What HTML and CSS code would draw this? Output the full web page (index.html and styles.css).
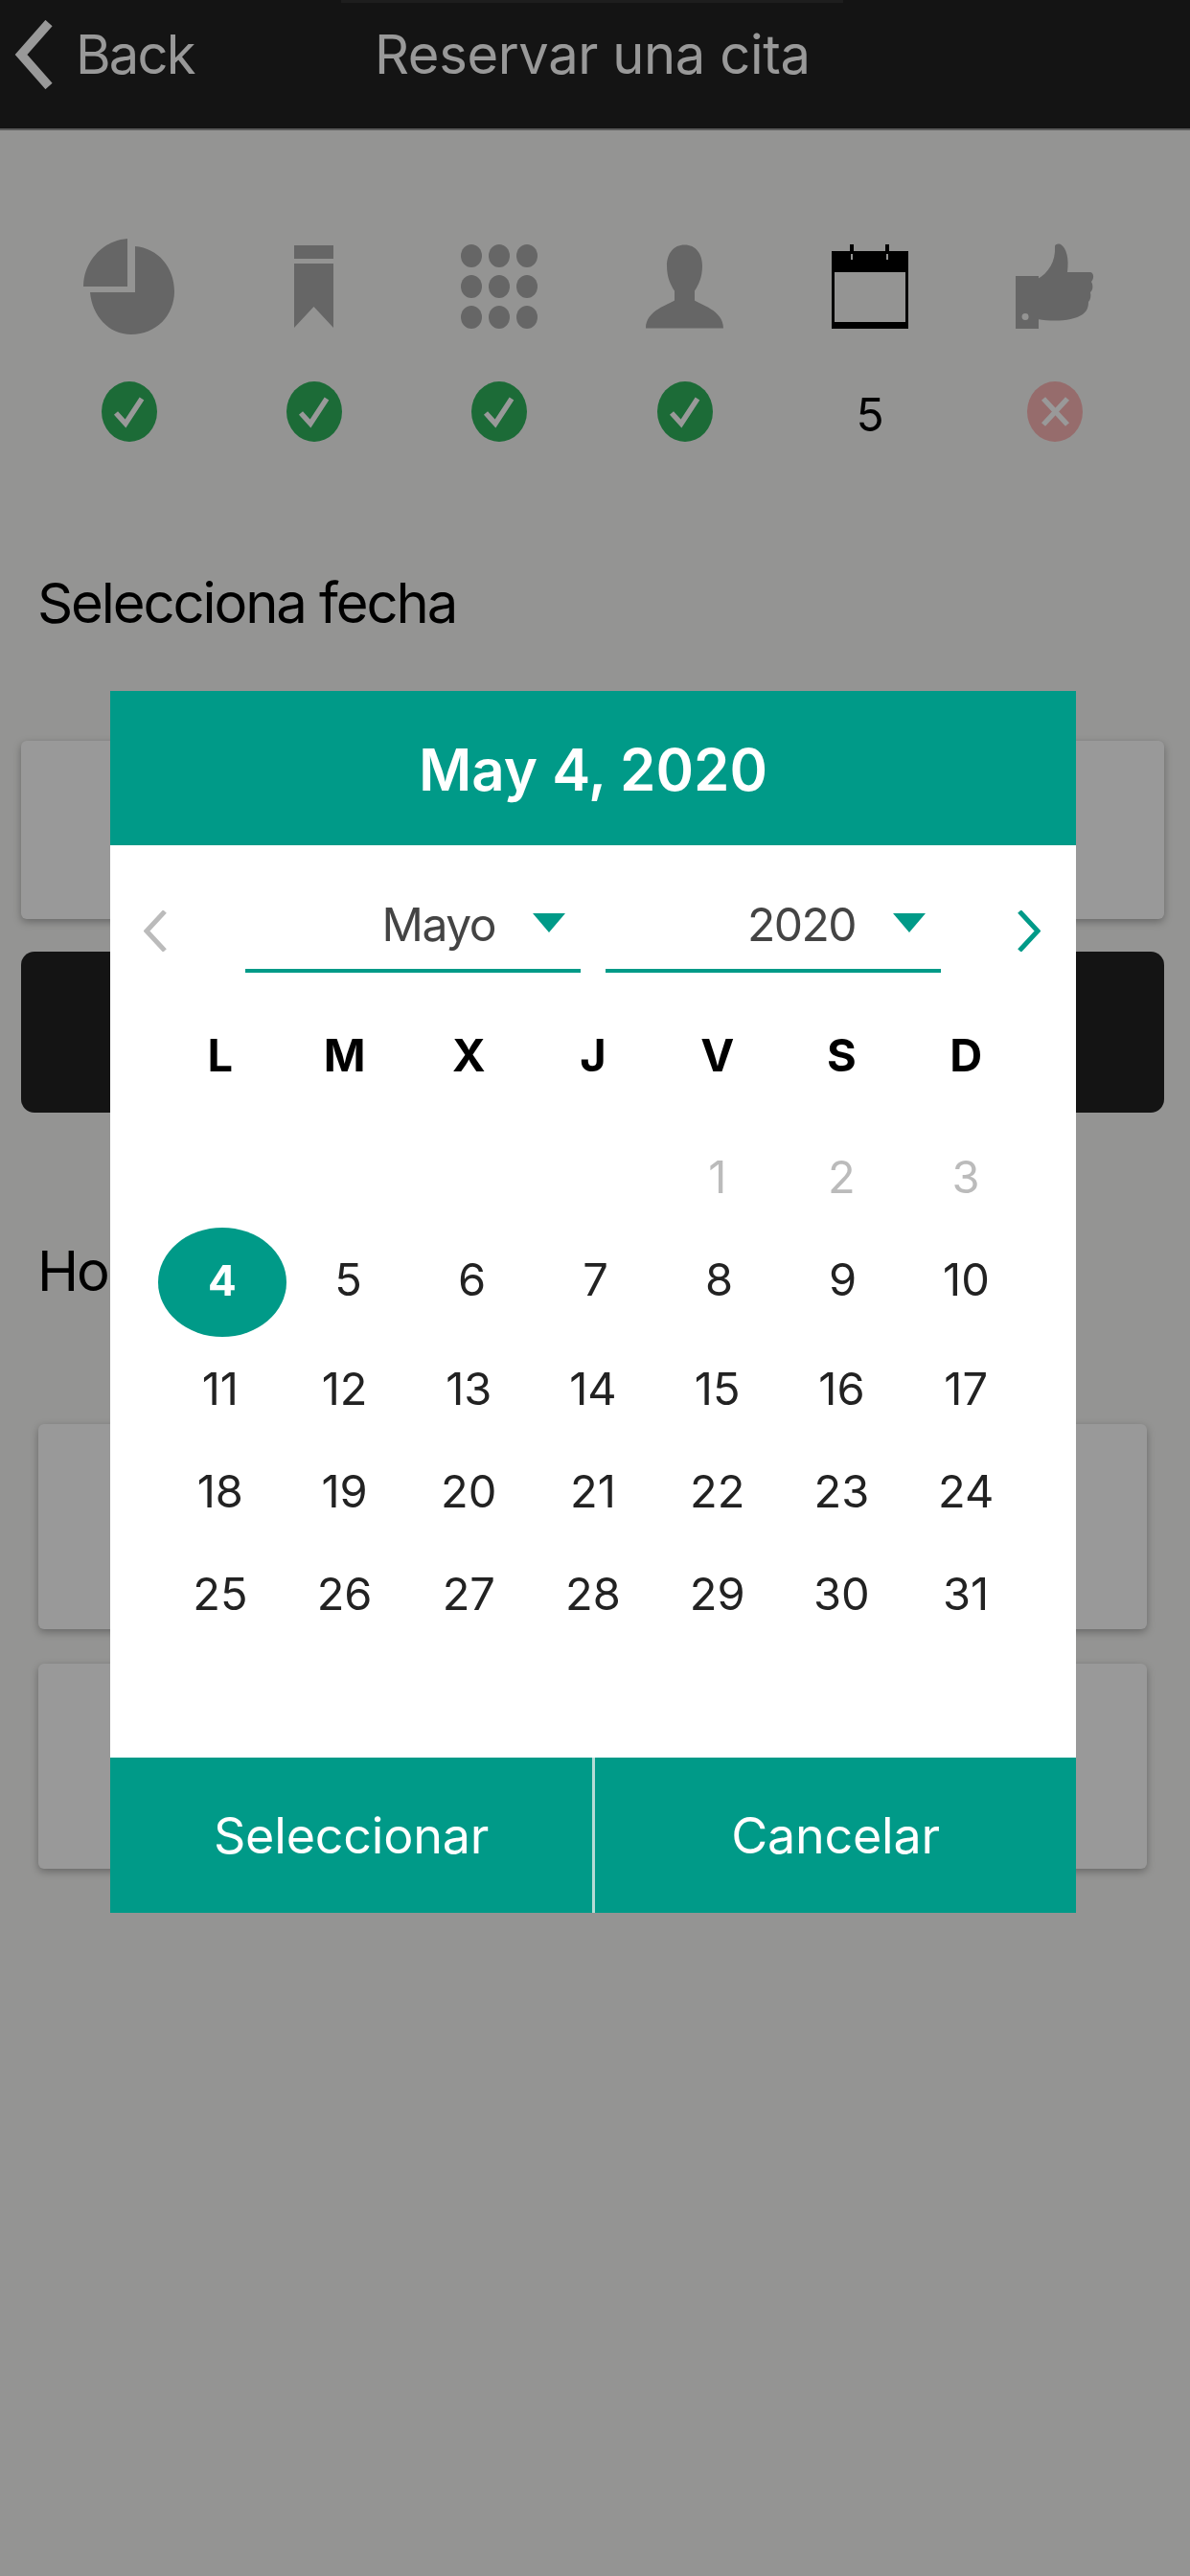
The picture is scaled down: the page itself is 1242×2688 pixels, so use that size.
FILE: index.html
```html
<!DOCTYPE html>
<html lang="es">
<head>
<meta charset="utf-8">
<title>Reservar una cita</title>
<link rel="stylesheet" href="styles.css">
</head>
<body>

<svg class="defs" width="0" height="0">
    <symbol id="done" viewBox="0 0 58 63">
        <ellipse cx="29" cy="31.5" rx="29" ry="31.5" fill="#2fb25d"/>
        <path d="M15 33 L25 44 L42 18" fill="none" stroke="#fff" stroke-width="5.5"/>
    </symbol>
    <symbol id="pending" viewBox="0 0 58 63">
        <ellipse cx="29" cy="31.5" rx="29" ry="31.5" fill="#fbb4b4"/>
        <path d="M17 18 L42 45 M42 18 L17 45" fill="none" stroke="#fff" stroke-width="5.5"/>
    </symbol>
</svg>

<div class="screen">
    <div class="topbar">
        <div class="notch"></div>
        <div class="back">
            <svg class="back-arrow" width="40" height="72" viewBox="0 0 40 72">
                <path d="M36 3 L7 36 L36 69" fill="none" stroke="currentColor" stroke-width="9.5"/>
            </svg>
            <span>Back</span>
        </div>
        <div class="topbar-title">Reservar una cita</div>
    </div>

    <div class="steps">
        <div class="step">
            <svg class="step-icon" width="95" height="100" viewBox="0 0 95 100">
                <path d="M46 0 L46 50 L0 50 C0 24 20 2 46 0 Z"/>
                <path d="M54 8 C78 10 95 30 95 55 C95 80 76 100 50 100 C26 100 9 80 7 56 L54 56 Z"/>
            </svg>
            <svg class="step-state" width="58" height="63"><use href="#done"/></svg>
        </div>
        <div class="step">
            <svg class="step-icon" width="41" height="86" viewBox="0 0 41 86">
                <path d="M0 0 H41 V14 H0 Z M0 19 H41 V86 L20.5 64 L0 86 Z"/>
            </svg>
            <svg class="step-state" width="58" height="63"><use href="#done"/></svg>
        </div>
        <div class="step">
            <svg class="step-icon" width="80" height="88" viewBox="0 0 80 88">
                <ellipse cx="11" cy="12" rx="11" ry="12"/><ellipse cx="40" cy="12" rx="11" ry="12"/><ellipse cx="69" cy="12" rx="11" ry="12"/>
                <ellipse cx="11" cy="44" rx="11" ry="12"/><ellipse cx="40" cy="44" rx="11" ry="12"/><ellipse cx="69" cy="44" rx="11" ry="12"/>
                <ellipse cx="11" cy="76" rx="11" ry="12"/><ellipse cx="40" cy="76" rx="11" ry="12"/><ellipse cx="69" cy="76" rx="11" ry="12"/>
            </svg>
            <svg class="step-state" width="58" height="63"><use href="#done"/></svg>
        </div>
        <div class="step">
            <svg class="step-icon" width="81" height="87" viewBox="0 0 81 87">
                <path d="M40.5 0 C52 0 59 9 59 22 C59 34 55 42 51 48 L51 58 C56 62 81 68 81 87 L0 87 C0 68 25 62 30 58 L30 48 C26 42 22 34 22 22 C22 9 29 0 40.5 0 Z"/>
            </svg>
            <svg class="step-state" width="58" height="63"><use href="#done"/></svg>
        </div>
        <div class="step">
            <svg class="step-icon" width="80" height="88" viewBox="0 0 80 88">
                <path d="M0 7 H80 V88 H0 Z" fill="#000"/>
                <path d="M3 29 H77 V81 H3 Z" fill="#f7f7f5"/>
                <path d="M19 0 H23 V19 H19 Z M56 0 H60 V19 H56 Z" fill="#000"/>
                <path d="M20 10 H22 V16 H20 Z M57 10 H59 V16 H57 Z" fill="#f7f7f5"/>
            </svg>
            <div class="step-num">5</div>
        </div>
        <div class="step">
            <svg class="step-icon" width="82" height="88" viewBox="0 0 82 88">
                <path fill-rule="evenodd" d="M0 33 H24 V88 H0 Z M10 72 A3.5 3.5 0 1 0 10.1 79 A3.5 3.5 0 1 0 10 72 Z"/>
                <path d="M23 36 C34 30 42 18 41 2 C41 0 44 -1 47 0 C53 4 56 14 54 29 L78 29 C82 30 82 36 79 39 C81 42 81 48 78 50 C79 54 78 58 76 60 C76 66 74 70 70 73 C60 80 40 81 23 78 Z"/>
            </svg>
            <svg class="step-state" width="58" height="63"><use href="#pending"/></svg>
        </div>
    </div>

    <div class="content">
        <h2 class="section-label">Selecciona fecha</h2>
        <div class="card date-card"></div>
        <div class="dark-btn"></div>
        <h2 class="section-label hour-label">Hora</h2>
        <div class="hour-list">
            <div class="card hour-card"></div>
            <div class="card hour-card"></div>
        </div>
    </div>

    <div class="overlay">
        <div class="picker">
            <div class="picker-head">May 4, 2020</div>

            <div class="picker-body">
                <div class="month-nav">
                    <svg class="chevron chevron-off" width="24" height="43" viewBox="0 0 24 43">
                        <path d="M22 1 L3 21.5 L22 42" fill="none" stroke="currentColor" stroke-width="5"/>
                    </svg>
                    <div class="select select-month">
                        <span>Mayo</span>
                        <i class="caret"></i>
                    </div>
                    <div class="select select-year">
                        <span>2020</span>
                        <i class="caret"></i>
                    </div>
                    <svg class="chevron chevron-on" width="24" height="43" viewBox="0 0 24 43">
                        <path d="M2 1 L21 21.5 L2 42" fill="none" stroke="currentColor" stroke-width="5"/>
                    </svg>
                </div>

                <div class="week weekdays">
                    <div>L</div><div>M</div><div>X</div><div>J</div><div>V</div><div>S</div><div>D</div>
                </div>

                <div class="week first-week">
                    <div></div><div></div><div></div><div></div>
                    <div class="muted">1</div><div class="muted">2</div><div class="muted">3</div>
                </div>
                <div class="week selected-week">
                    <div class="selected">4</div><div>5</div><div>6</div><div>7</div><div>8</div><div>9</div><div>10</div>
                </div>
                <div class="week">
                    <div>11</div><div>12</div><div>13</div><div>14</div><div>15</div><div>16</div><div>17</div>
                </div>
                <div class="week">
                    <div>18</div><div>19</div><div>20</div><div>21</div><div>22</div><div>23</div><div>24</div>
                </div>
                <div class="week">
                    <div>25</div><div>26</div><div>27</div><div>28</div><div>29</div><div>30</div><div>31</div>
                </div>
            </div>

            <div class="picker-foot">
                <div class="foot-btn">Seleccionar</div>
                <div class="foot-btn">Cancelar</div>
            </div>
        </div>
    </div>
</div>

</body>
</html>
```

FILE: styles.css
```css
body {
    margin: 0;
    background: #f7f7f5;
    font-family: Inter, Roboto, "Liberation Sans", sans-serif;
}

.defs {
    position: absolute;
}

.screen {
    position: relative;
    width: 1242px;
    height: 2688px;
    overflow: hidden;
    background: #f7f7f5;
    filter: blur(0.7px);
}

/* top bar */
.topbar {
    position: relative;
    height: 136px;
    background: #222222;
    color: #ffffff;
    display: flex;
    align-items: flex-start;
    border-bottom: 2px solid #999999;
    box-sizing: border-box;
}

.notch {
    position: absolute;
    left: 356px;
    top: 0;
    width: 524px;
    height: 3px;
    background: #333333;
}

.back {
    display: flex;
    align-items: center;
    width: 391px;
    height: 114px;
    padding-left: 15px;
    box-sizing: border-box;
    font-size: 56px;
    letter-spacing: -1.8px;
}

.back-arrow {
    margin-right: 24px;
}

.topbar-title {
    height: 114px;
    line-height: 114px;
    font-size: 56px;
    letter-spacing: -0.35px;
    white-space: nowrap;
}

/* steps */
.steps {
    display: grid;
    grid-template-columns: repeat(6, 1fr);
    margin: 113px 44px 0 38px;
}

.step {
    display: flex;
    flex-direction: column;
    align-items: center;
    height: 212px;
}

.step-icon {
    height: 100px;
    fill: #aaaaaa;
    margin-bottom: 49px;
}

.step-state {
    display: block;
}

.step-num {
    height: 63px;
    line-height: 70px;
    font-size: 48px;
    color: #000000;
}

/* form behind the picker */
.content {
    padding: 133px 27px 0 22px;
}

.section-label {
    margin: 0 0 0 17px;
    height: 70px;
    line-height: 70px;
    font-size: 58px;
    font-weight: 400;
    letter-spacing: -2.1px;
    color: #000000;
}

.card {
    background: #ffffff;
    border-radius: 6px;
    box-shadow: 0 3px 8px rgba(0, 0, 0, 0.3);
}

.date-card {
    height: 186px;
    margin-top: 109px;
}

.dark-btn {
    height: 168px;
    margin-top: 34px;
    background: #222222;
    border-radius: 14px;
}

.hour-label {
    margin-top: 130px;
}

.hour-list {
    display: flex;
    flex-direction: column;
    gap: 36px;
    margin: 125px 18px 0;
}

.hour-card {
    height: 214px;
}

/* date picker dialog */
.overlay {
    position: absolute;
    inset: 0;
    background: rgba(0, 0, 0, 0.4);
    padding: 721px 0 0 115px;
    box-sizing: border-box;
}

.picker {
    width: 1008px;
    height: 1275px;
    background: #ffffff;
    display: flex;
    flex-direction: column;
}

.picker-head {
    height: 161px;
    line-height: 165px;
    background: #009a88;
    color: #ffffff;
    text-align: center;
    font-size: 60px;
    font-weight: 600;
}

.picker-body {
    flex: 1;
    padding: 0 50px;
}

.month-nav {
    display: flex;
    align-items: flex-start;
    height: 162px;
    margin: 0 -15px;
}

.chevron {
    flex: none;
    margin-top: 68px;
}

.chevron-off {
    color: #bbbbbb;
}

.chevron-on {
    color: #009a88;
}

.select {
    flex: none;
    display: flex;
    align-items: center;
    justify-content: flex-end;
    width: 350px;
    height: 133px;
    box-sizing: border-box;
    padding-top: 36px;
    border-bottom: 4px solid #009a88;
    font-size: 48px;
    letter-spacing: -1.5px;
    color: #444444;
}

.select-month {
    margin-left: 82px;
    padding-right: 16px;
}

.select-year {
    margin-left: 26px;
    margin-right: 80px;
    padding-right: 16px;
}

.caret {
    display: block;
    width: 0;
    height: 0;
    margin: -4px 0 0 39px;
    border-left: 17px solid transparent;
    border-right: 17px solid transparent;
    border-top: 20px solid #009a88;
}

.week {
    display: grid;
    grid-template-columns: repeat(7, 1fr);
    height: 107px;
    align-items: center;
    text-align: center;
    font-size: 47px;
    color: #222222;
}

.weekdays {
    height: 113px;
    font-weight: 700;
    color: #000000;
    margin-bottom: 18px;
}

.first-week {
    height: 105px;
}

.muted {
    color: #bbbbbb;
}

.selected-week {
    grid-template-columns: 134px repeat(6, 1fr);
    height: 115px;
}

.selected-week div:not(.selected) {
    margin-top: -6px;
}

.selected {
    height: 114px;
    line-height: 110px;
    border-radius: 50%;
    background: #009a88;
    color: #ffffff;
    font-weight: 700;
    font-size: 44px;
}

.picker-foot {
    display: flex;
    height: 162px;
    background: #009a88;
    color: #ffffff;
    font-size: 52px;
    letter-spacing: -0.2px;
}

.foot-btn {
    flex: 1;
    text-align: center;
    line-height: 164px;
}

.foot-btn + .foot-btn {
    border-left: 3px solid #b5dcd6;
    flex: none;
    width: 505px;
    box-sizing: border-box;
}
```
